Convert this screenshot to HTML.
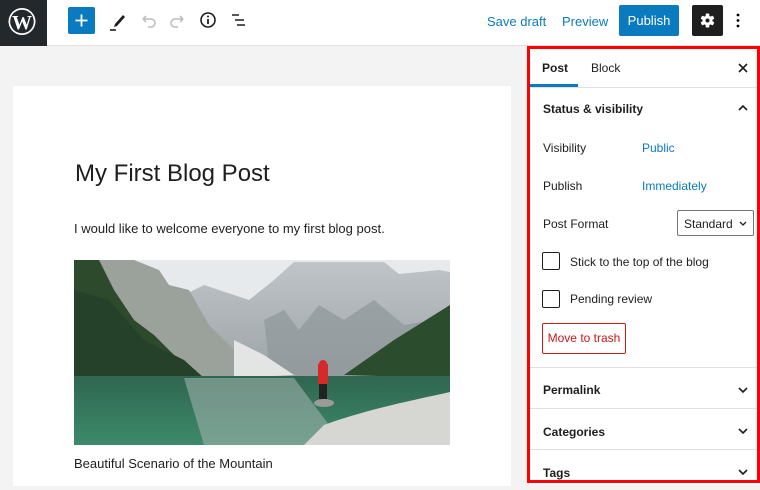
<!DOCTYPE html>
<html><head><meta charset="utf-8"><style>
*{margin:0;padding:0;box-sizing:border-box}
body{width:760px;height:485px;overflow:hidden;background:#f3f3f3;font-family:"Liberation Sans",sans-serif;position:relative;color:#1e1e1e}
.top{position:absolute;left:0;top:0;width:760px;height:46px;background:#fff;border-bottom:1px solid #e0e0e0}
.wp{position:absolute;left:0;top:0;width:47px;height:46px;background:#23282d}
.abs{position:absolute}
.canvas{position:absolute;left:13px;top:86px;width:498px;height:400px;background:#fff}
.side{position:absolute;left:528px;top:47px;width:232px;height:438px;background:#fff;border-left:1px solid #e0e0e0}
.red{position:absolute;left:527px;top:46px;width:233px;height:437px;border:3px solid #f00}
.t13{font-size:13px}
.lbl{position:absolute;left:543px;font-size:12px;color:#1e1e1e}
.link{position:absolute;left:642px;font-size:12px;color:#0a7bbf}
.sec{position:absolute;left:530px;width:230px;border-top:1px solid #e0e0e0}
.sec span{position:absolute;left:13px;font-size:12px;font-weight:bold}
.cb{position:absolute;left:542px;width:18px;height:18px;border:1.5px solid #1e1e1e;border-radius:2px}
</style></head><body>
<div class="top"></div>
<div class="wp"><svg width="47" height="46" viewBox="0 0 47 46"><circle cx="22" cy="21.5" r="13.5" fill="#fff"/><circle cx="22" cy="21.5" r="11.8" fill="#23282d"/><text x="22" y="29" font-family="Liberation Serif" font-weight="bold" font-size="20" fill="#fff" text-anchor="middle">W</text></svg></div>
<div class="abs" style="left:68px;top:7px;width:27px;height:27px;background:#0a7bbf;border-radius:2px"><svg width="27" height="27"><path d="M13.5 7.5v12M7.5 13.5h12" stroke="#fff" stroke-width="1.8"/></svg></div>
<svg class="abs" style="left:105px;top:8px" width="24" height="26"><path d="M10 16l8-9 2 2-8 9-3 1z" fill="#1e1e1e"/><path d="M5 22h6" stroke="#1e1e1e" stroke-width="1.6"/></svg>
<svg class="abs" style="left:136px;top:9px" width="24" height="24"><path d="M7 10h8a4 4 0 010 8h-3M7 10l3-3M7 10l3 3" stroke="#bbb" stroke-width="1.5" fill="none"/></svg>
<svg class="abs" style="left:166px;top:9px" width="24" height="24"><path d="M17 10H9a4 4 0 000 8h3M17 10l-3-3M17 10l-3 3" stroke="#bbb" stroke-width="1.5" fill="none"/></svg>
<svg class="abs" style="left:196px;top:8px" width="24" height="24"><circle cx="12" cy="12" r="7" stroke="#1e1e1e" stroke-width="1.6" fill="none"/><path d="M12 11v5" stroke="#1e1e1e" stroke-width="1.8"/><circle cx="12" cy="8.5" r="1" fill="#1e1e1e"/></svg>
<svg class="abs" style="left:228px;top:8px" width="24" height="24"><path d="M4 7h7M7 12h9M9 17h8" stroke="#1e1e1e" stroke-width="1.6"/></svg>
<div class="abs t13" style="left:487px;top:14px;color:#0a7bbf">Save draft</div>
<div class="abs t13" style="left:562px;top:14px;color:#0a7bbf">Preview</div>
<div class="abs t13" style="left:619px;top:5px;width:60px;height:31px;background:#0a7bbf;color:#fff;border-radius:2px;text-align:center;line-height:31px">Publish</div>
<div class="abs" style="left:692px;top:5px;width:31px;height:31px;background:#1e1e1e;border-radius:2px"><svg width="31" height="31"><g fill="#fff" transform="translate(15.5 15.5)"><rect x="-1.8" y="-7" width="3.6" height="14" rx="0.8"/><rect x="-1.8" y="-7" width="3.6" height="14" rx="0.8" transform="rotate(60)"/><rect x="-1.8" y="-7" width="3.6" height="14" rx="0.8" transform="rotate(120)"/><circle r="5"/></g><circle cx="15.5" cy="15.5" r="2" fill="#1e1e1e"/></svg></div>
<svg class="abs" style="left:733px;top:10px" width="10" height="22"><circle cx="5" cy="5" r="1.4"/><circle cx="5" cy="10.5" r="1.4"/><circle cx="5" cy="16" r="1.4"/></svg>

<div class="canvas"></div>
<div class="abs" style="left:75px;top:160px;font-size:24px">My First Blog Post</div>
<div class="abs t13" style="left:74px;top:221px">I would like to welcome everyone to my first blog post.</div>
<svg class="abs" style="left:74px;top:260px" width="376" height="185" viewBox="0 0 376 185">
<defs><linearGradient id="w" x1="0" y1="0" x2="0" y2="1"><stop offset="0" stop-color="#2f6650"/><stop offset="1" stop-color="#3d8a6a"/></linearGradient>
<linearGradient id="m" x1="0" y1="0" x2="0" y2="1"><stop offset="0" stop-color="#bfc4c8"/><stop offset="1" stop-color="#9ca3a6"/></linearGradient></defs>
<rect width="376" height="185" fill="#e6eaec"/>
<path d="M100 40L130 25 175 40 200 20 220 2 310 2 325 14 365 10 376 12 376 118 110 118z" fill="url(#m)"/>
<path d="M190 60l20-10 15 20 20-25 25 15 30-20 30 25 30-5 6 40 -120 20-50-10z" fill="#8f979a" opacity=".7"/>
<path d="M60 0L85 10 95 25 115 30 135 65 165 95 180 118 0 118 0 0z" fill="#9aa29b"/>
<path d="M0 0L25 0 40 30 60 60 80 75 100 95 120 115 0 115z" fill="#2e4a2c"/>
<path d="M0 30L35 40 70 80 110 100 130 118 0 118z" fill="#26412a"/>
<path d="M270 115L320 80 376 45 376 118z" fill="#2c4d2d"/>
<path d="M160 80l30 15 30 20 -60 3z" fill="#e3e5e4"/>
<rect y="116" width="376" height="69" fill="url(#w)"/>
<path d="M110 118l110 0 50 67-140 0z" fill="#9fb1ac" opacity=".6"/>
<path d="M250 165C290 150 340 140 376 132L376 185 230 185z" fill="#d6d6d2"/>
<rect x="244" y="104" width="10" height="20" fill="#d42a2a"/>
<circle cx="249" cy="104" r="4" fill="#d42a2a"/>
<rect x="245" y="124" width="8" height="15" fill="#222"/>
<ellipse cx="250" cy="143" rx="10" ry="4" fill="#9a9c98"/>
</svg>
<div class="abs t13" style="left:74px;top:456px">Beautiful Scenario of the Mountain</div>

<div class="side"></div>
<div class="abs" style="left:542px;top:61px;font-size:12px;font-weight:bold;color:#1e1e1e">Post</div>
<div class="abs" style="left:591px;top:61px;font-size:12px">Block</div>
<div class="abs" style="left:530px;top:84px;width:48px;height:3px;background:#0a7bbf"></div>
<svg class="abs" style="left:736px;top:61px" width="14" height="14"><path d="M3 3l8 8M11 3l-8 8" stroke="#1e1e1e" stroke-width="1.6"/></svg>
<div class="sec" style="top:87px;height:0"></div>
<div class="abs" style="left:543px;top:102px;font-size:12px;font-weight:bold">Status &amp; visibility</div>
<svg class="abs" style="left:736px;top:101px" width="14" height="14"><path d="M3 9l4-4 4 4" stroke="#1e1e1e" stroke-width="1.6" fill="none"/></svg>
<div class="lbl" style="top:141px">Visibility</div><div class="link" style="top:141px">Public</div>
<div class="lbl" style="top:179px">Publish</div><div class="link" style="top:179px">Immediately</div>
<div class="lbl" style="top:217px">Post Format</div>
<div class="abs" style="left:677px;top:210px;width:77px;height:26px;border:1px solid #757575;border-radius:2px;font-size:12px;padding:6px 0 0 6px">Standard</div>
<svg class="abs" style="left:738px;top:218px" width="10" height="10"><path d="M2 4l3 3 3-3" stroke="#1e1e1e" stroke-width="1.3" fill="none"/></svg>
<div class="cb" style="top:252px"></div><div class="abs" style="left:570px;top:255px;font-size:12px">Stick to the top of the blog</div>
<div class="cb" style="top:290px"></div><div class="abs" style="left:570px;top:292px;font-size:12px">Pending review</div>
<div class="abs" style="left:542px;top:323px;width:84px;height:31px;border:1px solid #cc1818;border-radius:2px;color:#cc1818;font-size:12px;text-align:center;line-height:29px">Move to trash</div>
<div class="sec" style="top:367px;height:41px"><span style="top:15px">Permalink</span></div>
<div class="sec" style="top:408px;height:41px"><span style="top:16px">Categories</span></div>
<div class="sec" style="top:449px;height:41px"><span style="top:16px">Tags</span></div>
<svg class="abs" style="left:736px;top:383px" width="14" height="14"><path d="M3 5l4 4 4-4" stroke="#1e1e1e" stroke-width="1.6" fill="none"/></svg>
<svg class="abs" style="left:736px;top:424px" width="14" height="14"><path d="M3 5l4 4 4-4" stroke="#1e1e1e" stroke-width="1.6" fill="none"/></svg>
<svg class="abs" style="left:736px;top:465px" width="14" height="14"><path d="M3 5l4 4 4-4" stroke="#1e1e1e" stroke-width="1.6" fill="none"/></svg>
<div class="red"></div>
</body></html>
